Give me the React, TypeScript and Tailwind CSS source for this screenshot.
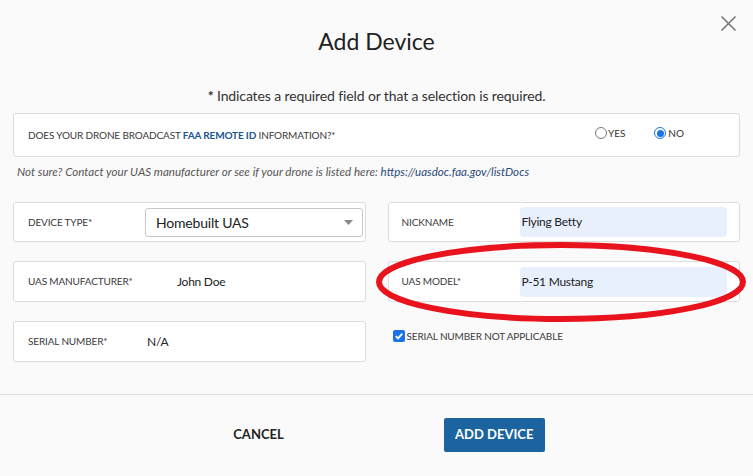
import React from "react";

const font = { fontFamily: "Lato, 'Open Sans', sans-serif" };

const Box = ({ children, className = "" }: { children: React.ReactNode; className?: string }) => (
  <div className={"flex items-center bg-white border border-[#dcdcdc] rounded-[3px] " + className}>{children}</div>
);

const Label = ({ children, className = "" }: { children: React.ReactNode; className?: string }) => (
  <span className={"text-[10px] tracking-[-0.15px] uppercase text-[#3a3a3a] " + className}>{children}</span>
);

const App = () => {
  return (
    <div className="relative w-full h-[476px] bg-[#fafafa] text-[#333] overflow-hidden" style={font}>
      <button className="absolute right-[16px] top-[15px] text-[#777]">
        <svg width="17" height="17" viewBox="0 0 17 17" fill="none" stroke="currentColor" strokeWidth="1.6">
          <path d="M1.5 1.5 L15.5 15.5 M15.5 1.5 L1.5 15.5" />
        </svg>
      </button>

      <h1 className="pt-[25px] text-center text-[23px] leading-[32px] text-[#222]">Add Device</h1>
      <p className="mt-[29px] text-center text-[14px] tracking-[-0.12px] leading-[20px] text-[#333]">
        <b>*</b> Indicates a required field or that a selection is required.
      </p>

      <div className="px-[13px] mt-[7px]">
        <Box className="h-[44px] px-[14px]">
          <Label className="flex-1">
            Does your drone broadcast <b className="text-[#205493]">FAA Remote ID</b> information?*
          </Label>
          <label className="flex items-center gap-[1px] text-[10px] text-[#333] mr-[29px] -mt-[4px]">
            <span className="w-[12px] h-[12px] rounded-full border border-[#777] bg-white" />
            YES
          </label>
          <label className="flex items-center gap-[2px] text-[10px] text-[#333] mr-[41px] -mt-[4px]">
            <span className="w-[12px] h-[12px] rounded-full border border-[#1a73e8] bg-white flex items-center justify-center">
              <span className="w-[7px] h-[7px] rounded-full bg-[#1a73e8]" />
            </span>
            NO
          </label>
        </Box>
        <p className="mt-[7px] px-[4px] text-[11.6px] leading-[16px] italic text-[#555]">
          Not sure? Contact your UAS manufacturer or see if your drone is listed here:{" "}
          <span className="text-[#2b4b78]">https://uasdoc.faa.gov/listDocs</span>
        </p>

        <div className="grid grid-cols-2 gap-x-[22px] gap-y-[19px] mt-[22px]">
          <Box className="h-[40px] pl-[14px] pr-[2px]">
            <Label className="w-[117px]">Device Type*</Label>
            <div className="flex-1 h-[29px] flex items-center justify-between border border-[#c8c8c8] rounded-[3px] pl-[10px] pr-[9px] text-[14px] tracking-[-0.2px] text-[#222]">
              Homebuilt UAS
              <svg width="9" height="5" viewBox="0 0 9 5"><path d="M0 0 H9 L4.5 5 Z" fill="#888" /></svg>
            </div>
          </Box>
          <Box className="h-[40px] pl-[13px] pr-[12px]">
            <Label className="w-[118px]">Nickname</Label>
            <div className="flex-1 h-[30px] flex items-center bg-[#e8f0fe] rounded-[4px] px-[2px] text-[12px] tracking-[-0.25px] text-[#222]">
              Flying Betty
            </div>
          </Box>

          <Box className="h-[41px] pl-[14px]">
            <Label className="w-[149px]">UAS Manufacturer*</Label>
            <span className="text-[12px] tracking-[-0.25px] text-[#222]">John Doe</span>
          </Box>
          <Box className="h-[41px] pl-[13px] pr-[12px]">
            <Label className="w-[118px]">UAS Model*</Label>
            <div className="flex-1 h-[30px] flex items-center bg-[#e8f0fe] rounded-[4px] px-[2px] text-[12px] tracking-[-0.25px] text-[#222]">
              P-51 Mustang
            </div>
          </Box>

          <Box className="h-[41px] pl-[14px]">
            <Label className="w-[119px]">Serial Number*</Label>
            <span className="text-[12px] tracking-[-0.25px] text-[#222]">N/A</span>
          </Box>
          <div className="flex items-start pl-[5px] pt-[9px] gap-[2px]">
            <span className="w-[12px] h-[12px] rounded-[2px] bg-[#1a73e8] flex items-center justify-center">
              <svg width="10" height="10" viewBox="0 0 10 10" fill="none" stroke="white" strokeWidth="1.8">
                <path d="M1.8 5.2 L4 7.4 L8.3 2.6" />
              </svg>
            </span>
            <Label className="leading-[12px]">Serial number not applicable</Label>
          </div>
        </div>
      </div>

      <div className="absolute left-0 right-0 top-[394px] border-t border-[#dedede]">
        <div className="flex items-center justify-center gap-[160px] pt-[23px] pl-[25px]">
          <button className="text-[13px] font-bold text-[#222] uppercase">Cancel</button>
          <button className="h-[34px] w-[101px] rounded-[2px] bg-[#1b64a0] text-white text-[13px] font-bold uppercase">
            Add Device
          </button>
        </div>
      </div>

      <svg className="absolute left-0 top-0 pointer-events-none" width="753" height="476">
        <ellipse cx="561" cy="282" rx="182" ry="37" fill="none" stroke="#e8131c" strokeWidth="6" />
      </svg>
    </div>
  );
};

export default App;
